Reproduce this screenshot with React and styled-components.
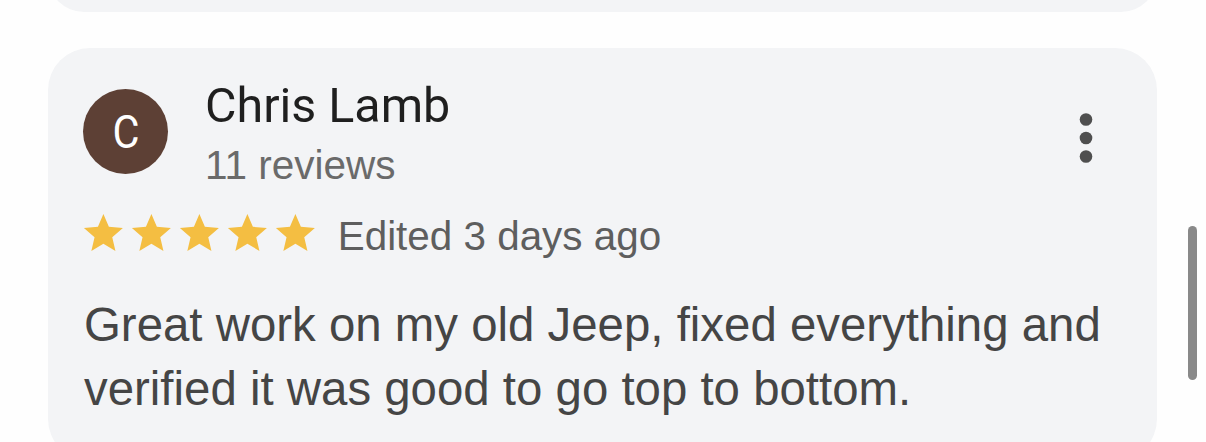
import React from "react";
import styled, { createGlobalStyle } from "styled-components";

const Global = createGlobalStyle`
  html, body { margin: 0; padding: 0; background: #fefefe; overflow: hidden; }
  body { font-family: "Liberation Sans", Arial, sans-serif; }
`;

const Page = styled.div`
  width: 1206px;
  height: 442px;
  overflow: hidden;
  background: #fefefe;
`;

const Card = styled.div`
  box-sizing: border-box;
  width: 1109px;
  margin-left: 48px;
  background: #f3f4f6;
  border-radius: 42px;
`;

const PrevCard = styled(Card)`
  height: 72px;
  margin-top: -60px;
`;

const ReviewCard = styled(Card)`
  margin-top: 36px;
  padding: 30px 49px 40px 35px;
`;

const Header = styled.div`
  display: flex;
  align-items: flex-start;
`;

const Avatar = styled.div`
  flex: none;
  width: 85px;
  height: 85px;
  margin-top: 11px;
  border-radius: 50%;
  background: #5d4035;
  color: #fff;
  display: flex;
  align-items: center;
  justify-content: center;
  font-family: Roboto, "Noto Sans", sans-serif;
  font-size: 46px;
  line-height: 1;
  transform-origin: center;
`;

const AvatarLetter = styled.span`
  display: inline-block;
  transform: scaleX(0.9);
`;

const Info = styled.div`
  flex: 1;
  margin-left: 37px;
`;

const Name = styled.div`
  font-family: Roboto, "Noto Sans", sans-serif;
  font-size: 48.4px;
  line-height: 56px;
  color: #1f1f1f;
`;

const Meta = styled.div`
  margin-top: 7px;
  font-size: 40.5px;
  line-height: 48px;
  color: #6a6a6a;
`;

const MenuButton = styled.button`
  flex: none;
  width: 44px;
  height: 72px;
  margin-top: 24px;
  padding: 0;
  border: 0;
  background: transparent;
  display: flex;
  align-items: center;
  justify-content: center;
`;

const RatingRow = styled.div`
  display: flex;
  align-items: flex-start;
  margin-top: 21px;
  margin-left: -3px;
`;

const Stars = styled.div`
  display: flex;
  gap: 1.2px;
`;

const Edited = styled.span`
  margin-left: 19px;
  margin-top: 2px;
  font-size: 40.4px;
  line-height: 48px;
  color: #5e5e5e;
`;

const Body = styled.p`
  margin: 33px 0 0 1px;
  font-size: 47.4px;
  line-height: 64px;
  color: #454545;
`;

const ScrollThumb = styled.div`
  position: fixed;
  left: 1188px;
  top: 226px;
  width: 9px;
  height: 154px;
  border-radius: 5px;
  background: #898989;
`;

const Star = () => (
  <svg width="46.8" height="46.8" viewBox="0 0 24 24">
    <path
      fill="#f4be42"
      d="M12 17.27L18.18 21l-1.64-7.03L22 9.24l-7.19-.61L12 2 9.19 8.63 2 9.24l5.46 4.73L5.82 21z"
    />
  </svg>
);

const MoreIcon = () => (
  <svg width="14" height="51" viewBox="0 0 14 51">
    <g fill="#4f4f4f">
      <circle cx="7" cy="6.5" r="6.3" />
      <circle cx="7" cy="25" r="6.3" />
      <circle cx="7" cy="43.5" r="6.3" />
    </g>
  </svg>
);

export default function App() {
  return (
    <Page>
      <Global />
      <PrevCard />
      <ReviewCard>
        <Header>
          <Avatar>
            <AvatarLetter>C</AvatarLetter>
          </Avatar>
          <Info>
            <Name>Chris Lamb</Name>
            <Meta>11 reviews</Meta>
          </Info>
          <MenuButton aria-label="More options">
            <MoreIcon />
          </MenuButton>
        </Header>
        <RatingRow>
          <Stars>
            {[0, 1, 2, 3, 4].map((i) => (
              <Star key={i} />
            ))}
          </Stars>
          <Edited>Edited 3 days ago</Edited>
        </RatingRow>
        <Body>
          Great work on my old Jeep, fixed everything and verified it was good
          to go top to bottom.
        </Body>
      </ReviewCard>
      <ScrollThumb />
    </Page>
  );
}
